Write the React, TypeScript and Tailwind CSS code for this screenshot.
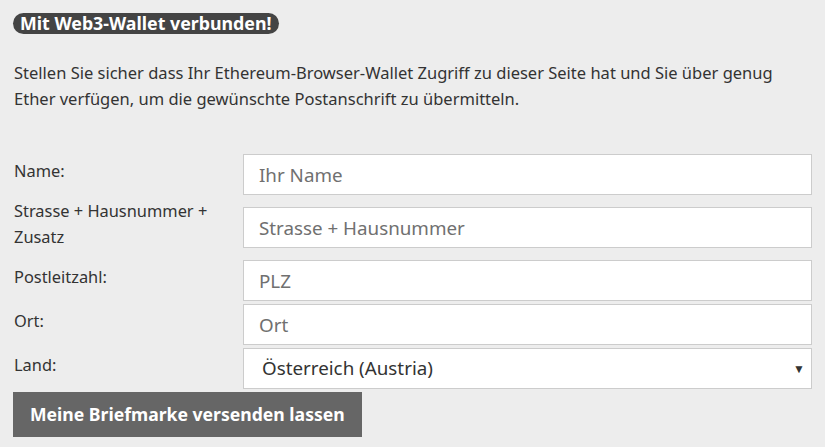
import React from 'react';

const fields = [
  { label: 'Name:', placeholder: 'Ihr Name' },
  { label: 'Strasse + Hausnummer + Zusatz', placeholder: 'Strasse + Hausnummer' },
  { label: 'Postleitzahl:', placeholder: 'PLZ' },
  { label: 'Ort:', placeholder: 'Ort' },
];

const App: React.FC = () => {
  return (
    <div
      className="min-h-[447px] w-full bg-[#ededed] px-[13px] pt-[12px] text-[#333333]"
      style={{ fontFamily: '"Noto Sans", "Open Sans", Arial, sans-serif' }}
    >
      <span className="inline-block rounded-full bg-[#444444] px-[7px] text-[17.8px] font-bold leading-[21px] text-white">
        Mit Web3-Wallet verbunden!
      </span>
      <p className="mt-[24px] pl-px text-[16.5px] leading-[26px]">
        Stellen Sie sicher dass Ihr Ethereum-Browser-Wallet Zugriff zu dieser Seite hat und Sie über genug Ether
        verfügen, um die gewünschte Postanschrift zu übermitteln.
      </p>

      <form className="mt-[42px] flex flex-col gap-[3px]" onSubmit={(e) => e.preventDefault()}>
        {fields.map((f) => (
          <div key={f.placeholder} className="flex items-center">
            <label className="w-[230px] shrink-0 pb-[7px] pl-px pr-[16px] text-[16.4px] leading-[26px]">
              {f.label}
            </label>
            <input
              className="h-[41px] flex-1 border border-[#cccccc] bg-white px-[15px] text-[18.8px] text-[#333333] outline-none placeholder:text-[#707070]"
              placeholder={f.placeholder}
            />
          </div>
        ))}
        <div className="flex items-center">
          <label className="w-[230px] shrink-0 pb-[7px] pl-px text-[16.4px] leading-[26px]">Land:</label>
          <div className="relative flex-1">
            <select
              defaultValue="AT"
              className="h-[41px] w-full appearance-none border border-[#cccccc] bg-white px-[18px] text-[18.8px] text-[#333333] outline-none"
            >
              <option value="AT">Österreich (Austria)</option>
              <option value="DE">Deutschland (Germany)</option>
              <option value="CH">Schweiz (Switzerland)</option>
            </select>
            <span className="pointer-events-none absolute right-[7px] top-[12px] text-[12px] text-[#333333]">▼</span>
          </div>
        </div>
        <div>
          <button
            type="submit"
            className="h-[45px] bg-[#666666] px-[17px] text-[17.6px] font-bold text-white"
          >
            Meine Briefmarke versenden lassen
          </button>
        </div>
      </form>
    </div>
  );
};

export default App;
